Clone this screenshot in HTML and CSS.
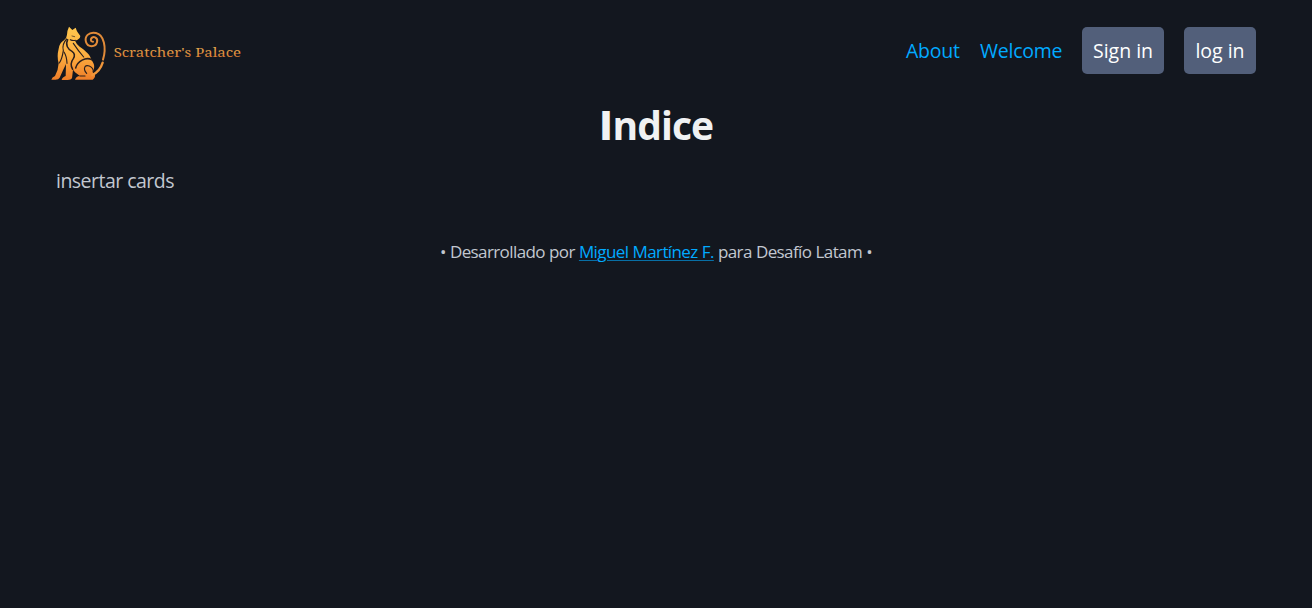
FILE: index.html
```html
<!DOCTYPE html>
<html lang="es">
<head>
<meta charset="utf-8">
<title>Scratcher's Palace</title>
<link rel="stylesheet" href="styles.css">
</head>
<body>
<header class="navbar">
  <a class="brand" href="#" aria-label="Scratcher's Palace">
    <svg class="logo" viewBox="0 0 600 186">
      <defs>
        <linearGradient id="fur" gradientUnits="userSpaceOnUse" x1="0" y1="12" x2="0" y2="174">
          <stop offset="0" stop-color="#ffc84e"/>
          <stop offset=".55" stop-color="#fdae40"/>
          <stop offset="1" stop-color="#ee7d28"/>
        </linearGradient>
        <linearGradient id="word" x1="0" y1="0" x2="0" y2="1">
          <stop offset=".25" stop-color="#e3aa50"/>
          <stop offset=".85" stop-color="#dc7a30"/>
        </linearGradient>
      </defs>
      <path fill="url(#fur)" d="M69 14 L79 24 L89 17 Q92 27 96 32 L103 42 Q103 50 95 53 L87 56 Q91 66 101 74 C119 87 133 97 136 114 C145 124 148 137 140 149 L147 158 Q149 166 140 173 L87 173 Q90 163 102 162 L87 151 L81 143 L78 169 Q75 174 65 174 L47 174 Q48 166 59 162 L60 126 L51 145 L41 167 Q38 173 28 173 L16 173 Q18 166 27 162 Q37 144 38 124 Q32 103 38 80 Q41 62 54 55 Q62 49 63 38 Q62 29 69 14Z"/>
      <path fill="none" stroke="#ef963b" stroke-width="7" stroke-linecap="round" d="M139 159 Q162 148 170 122"/>
      <path fill="none" stroke="#e18b39" stroke-width="6" stroke-linecap="round" d="M171 113 C182 77 174 38 150 33 C128 28 115 44 120 60 C125 77 149 76 153 61 C157 46 140 40 135 51 Q133 59 141 59"/>
      <g fill="none" stroke="#2a1f1d" stroke-width="3.4" stroke-linecap="round" stroke-linejoin="round">
        <path d="M62 51 Q47 67 52 86 Q48 112 40 123"/>
        <path stroke-width="4.5" d="M65 53 C57 69 66 82 78 88 Q90 96 82 110 Q70 126 80 142"/>
        <path d="M54 90 Q62 102 63 124"/>
        <path d="M82 64 Q98 88 113 105"/>
        <path d="M73 53 Q80 57 88 55"/>
        <path stroke-width="2" d="M78 42 L86 44"/>
        <path stroke-width="4.5" d="M137 113 C120 104 94 117 89 138"/>
        <path d="M117 134 Q121 129 130 132 Q143 138 142 151 M117 134 Q112 143 122 154"/>
        <path d="M102 162 L117 162"/>
      </g>
      <text class="wordmark" x="203" y="105" textLength="382" lengthAdjust="spacingAndGlyphs">Scratcher's Palace</text>
    </svg>
  </a>
  <nav class="menu">
    <a class="link about" href="#">About</a>
    <a class="link welcome" href="#">Welcome</a>
    <a class="button sign" href="#">Sign in</a>
    <a class="button log" href="#">log in</a>
  </nav>
</header>
<main class="content">
  <h1 class="title">Indice</h1>
  <p class="cards">insertar cards</p>
</main>
<footer class="footer">• Desarrollado por <a class="author" href="#">Miguel Martínez F.</a> para Desafío Latam •</footer>
</body>
</html>
```
FILE: styles.css
```css
body {
  margin: 0;
  padding: 22px 56px 0;
  background: #13171f;
  color: #c2c7d0;
  font: 19.5px/30px "Open Sans", "Noto Sans", sans-serif;
}
.navbar {
  display: flex;
  justify-content: space-between;
  height: 62px;
}
.brand {
  margin-left: -10px;
}
.logo {
  display: block;
  width: 200px;
  height: 62px;
}
.wordmark {
  font: 40px "Noto Serif", "DejaVu Serif", serif;
  fill: url(#word);
}
.menu {
  display: flex;
  align-items: flex-start;
  gap: 20px;
  padding-top: 5px;
  line-height: 47px;
  white-space: nowrap;
}
.link {
  color: #01aaff;
  text-decoration: none;
  letter-spacing: -0.25px;
}
.about { width: 54px; }
.welcome { width: 82px; }
.button {
  box-sizing: border-box;
  height: 47px;
  border-radius: 5px;
  background: #525f7a;
  color: #fff;
  text-align: center;
  text-decoration: none;
}
.sign { width: 82px; }
.log { width: 72px; }
.title {
  height: 45px;
  margin: 18px 0 0;
  color: #f0f1f3;
  font-size: 39px;
  line-height: 45px;
  font-weight: 700;
  text-align: center;
  letter-spacing: -0.9px;
}
.title::first-letter {
  font-family: "DejaVu Sans", sans-serif;
}
.cards {
  margin: 19px 0 0;
  letter-spacing: -0.52px;
}
.footer {
  margin-top: 43px;
  font-size: 17px;
  line-height: 26px;
  text-align: center;
  letter-spacing: -0.6px;
  word-spacing: 0.3px;
}
.author {
  color: #01aaff;
  text-decoration-color: rgba(1, 170, 255, 0.6);
  text-decoration-thickness: 1px;
  text-underline-offset: 2px;
}
```
